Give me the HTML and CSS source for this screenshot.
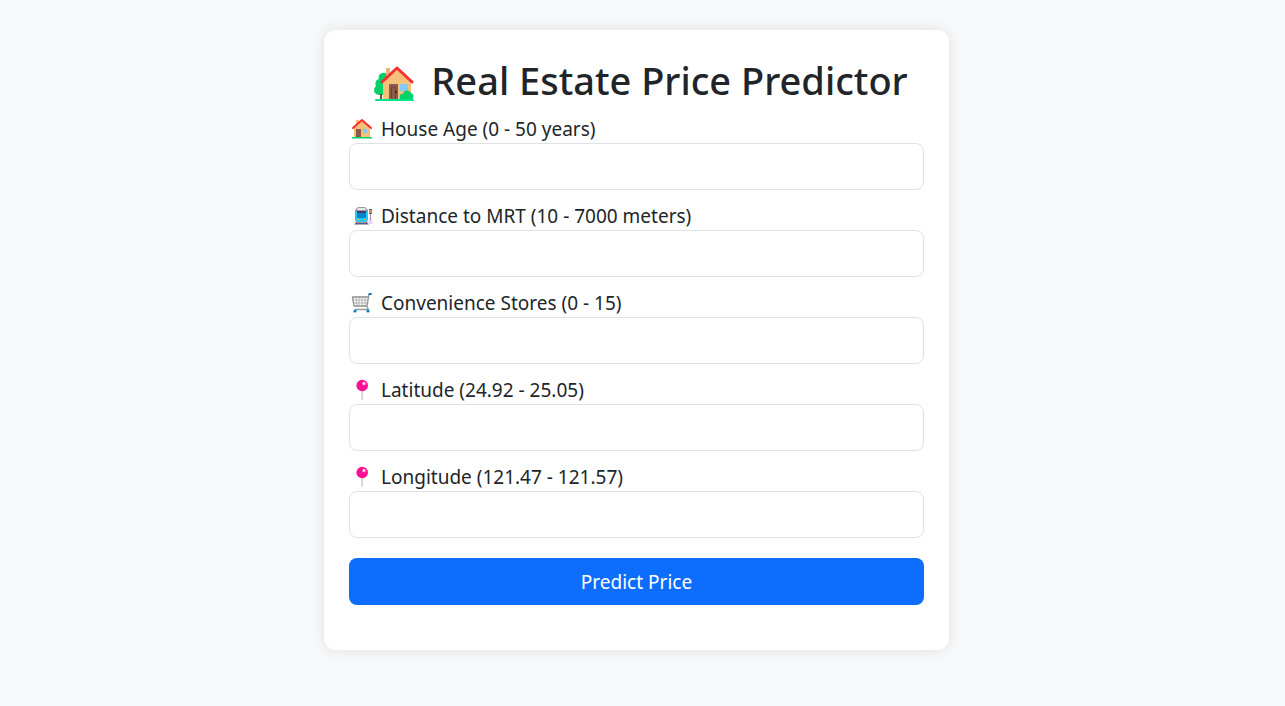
FILE: index.html
```html
<!DOCTYPE html>
<html lang="en">
<head>
<meta charset="utf-8">
<meta name="viewport" content="width=device-width, initial-scale=1">
<title>Real Estate Price Predictor</title>
<link rel="stylesheet" href="styles.css">
</head>
<body>
<svg class="sprite" aria-hidden="true">
  <symbol id="house" viewBox="0 0 22 22">
    <path fill="#f0bc78" d="M5 2h3v6H5z"/>
    <path fill="#f5c07a" d="M3 10l8-8 8 8v10H3z"/>
    <path fill="#8d5a4a" d="M5 11h5v9H5z"/>
    <path fill="#83cbff" d="M12 11h4v4h-4z"/>
    <path fill="none" stroke="#f8312f" stroke-width="2" stroke-linecap="round" stroke-linejoin="round" d="M2 10l9-8 9 8"/>
    <path fill="#00d26a" d="M1 19h20v1.500H1z"/>
  </symbol>
  <symbol id="pin" viewBox="0 0 22 22">
    <path fill="#d3d3d3" d="M10.300 11h1.800v9l-.9 1.500-.9-1.500z"/>
    <circle fill="#ff0f94" cx="11.200" cy="6.500" r="5.800"/>
    <circle fill="#ffc5e2" cx="13" cy="4.500" r="1.700"/>
  </symbol>
</svg>
<main class="card">
  <h1 class="title">
    <svg class="title-icon" viewBox="0 0 42 42" aria-hidden="true">
      <path fill="#00d26a" d="M10 12c-4 0-5 4-4 6-4 1-4 5-3 7-3 3-3 8 3 9h8V12z"/>
      <path fill="#7a4638" d="M7 33h2v5H7z"/>
      <path fill="#eab574" d="M13 7h4v10h-4z"/>
      <path fill="#f5c07a" d="M10 20L24 7l14 13v18H10z"/>
      <path fill="#8d5a4a" d="M16 24q0-1 1-1h7q1 0 1 1v14h-9z"/>
      <path fill="none" stroke="#6d4038" d="M18.500 37V26h4v11"/>
      <circle fill="#321b41" cx="23" cy="31" r="1"/>
      <path fill="#83cbff" d="M27 23h8v7h-8z"/>
      <path fill="none" stroke="#f8312f" stroke-width="3" stroke-linecap="round" stroke-linejoin="round" d="M9 21L24 7l15 14"/>
      <path fill="#00d26a" d="M28 39c-3-4 0-7 2-6 1-5 7-4 8-1 3 1 3 5 1 7z"/>
      <path fill="#00e58b" d="M3 38h37q1 0 1 2H2q0-2 1-2z"/>
    </svg>
    <span>Real Estate Price Predictor</span>
  </h1>
  <form class="form">
    <div class="field">
      <label class="label" for="age"><svg class="icon" aria-hidden="true"><use href="#house"/></svg>House Age (0 - 50 years)</label>
      <input class="input" id="age" type="text">
    </div>
    <div class="field">
      <label class="label" for="distance">
        <svg class="icon" viewBox="0 0 22 22" aria-hidden="true">
          <path fill="#b4acbc" d="M5 17h11l2 3H3z"/>
          <path fill="#635994" d="M5 17h11l1 2H4z"/>
          <path fill="#9b9b9b" d="M7 2h7l3 3v10l-2 3H6l-2-3V5z"/>
          <path fill="#e6e6e6" d="M7 3h7l1 2H6z"/>
          <path fill="#26c9fc" d="M5 6h11v9l-2 2H7l-2-2z"/>
          <path fill="#433b6b" d="M6 6h9v2H6z"/>
          <path fill="#0084ce" d="M6 8h9v5H6z"/>
          <path fill="#ffb02e" d="M6 14h2v1H6zM13 14h2v1h-2z"/>
          <path fill="#e4d6f5" d="M18 13h2l2 6h-5z"/>
          <path fill="#998ea4" d="M19 9h1v6h-1z"/>
          <path fill="#ff822d" d="M18 5h3v4h-3z"/>
          <path fill="#0074ba" d="M18 4h3v1h-3zM18 8h3v1h-3z"/>
        </svg>Distance to MRT (10 - 7000 meters)</label>
      <input class="input" id="distance" type="text">
    </div>
    <div class="field">
      <label class="label" for="stores">
        <svg class="icon" viewBox="0 0 22 22" aria-hidden="true">
          <path fill="none" stroke="#b4b4b4" d="M2 5h15M2 8h14.500M3 11h13M3 14h13M5 5l1 9M8 5v9M11 5v9M14 5v9"/>
          <path fill="none" stroke="#999" stroke-width="1.500" stroke-linejoin="round" d="M20 2h-2l-2 12H3L1.500 5H17M15.500 14l2 3.500H4"/>
          <path stroke="#0084ce" stroke-width="2" stroke-linecap="round" d="M18.500 2H20"/>
          <circle fill="#0084ce" cx="4" cy="19" r="1.600"/>
          <circle fill="#0084ce" cx="17" cy="19" r="1.600"/>
        </svg>Convenience Stores (0 - 15)</label>
      <input class="input" id="stores" type="text">
    </div>
    <div class="field">
      <label class="label" for="latitude"><svg class="icon" aria-hidden="true"><use href="#pin"/></svg>Latitude (24.92 - 25.05)</label>
      <input class="input" id="latitude" type="text">
    </div>
    <div class="field">
      <label class="label" for="longitude"><svg class="icon" aria-hidden="true"><use href="#pin"/></svg>Longitude (121.47 - 121.57)</label>
      <input class="input" id="longitude" type="text">
    </div>
    <button class="submit" type="button">Predict Price</button>
  </form>
</main>
</body>
</html>
```
FILE: styles.css
```css
* {
  box-sizing: border-box;
}

body {
  margin: 0;
  padding: 30px 12px 30px 0;
  background: #f8f9fa;
  color: #212529;
  font-family: "Segoe UI", "Noto Sans", "Open Sans", sans-serif;
  font-size: 19px;
  line-height: 28px;
}

.sprite {
  display: none;
}

.card {
  max-width: 625px;
  margin: 0 auto;
  padding: 25px 25px 45px;
  background: #fff;
  border-radius: 12px;
  box-shadow: 0 0 15px rgba(0, 0, 0, 0.1);
}

.title {
  display: flex;
  align-items: flex-end;
  justify-content: center;
  gap: 16px;
  margin: 0 0 10px;
  padding: 2px 0 0 8px;
  font-size: 38px;
  font-weight: 500;
  line-height: 46px;
}

.title-icon {
  flex: none;
  width: 42px;
  height: 42px;
}

.form {
  display: flex;
  flex-direction: column;
  gap: 10px;
}

.label {
  display: flex;
  align-items: center;
  gap: 8px;
  padding: 2px 0 0 2px;
}

.icon {
  flex: none;
  width: 22px;
  height: 22px;
}

.input {
  display: block;
  width: 100%;
  height: 47px;
  padding: 8px 15px;
  border: 1px solid #dee2e6;
  border-radius: 8px;
  background: #fff;
  color: inherit;
  font: inherit;
}

.submit {
  height: 47px;
  margin-top: 10px;
  border: 0;
  border-radius: 8px;
  background: #0d6efd;
  color: #fff;
  font: inherit;
  cursor: pointer;
}
```
